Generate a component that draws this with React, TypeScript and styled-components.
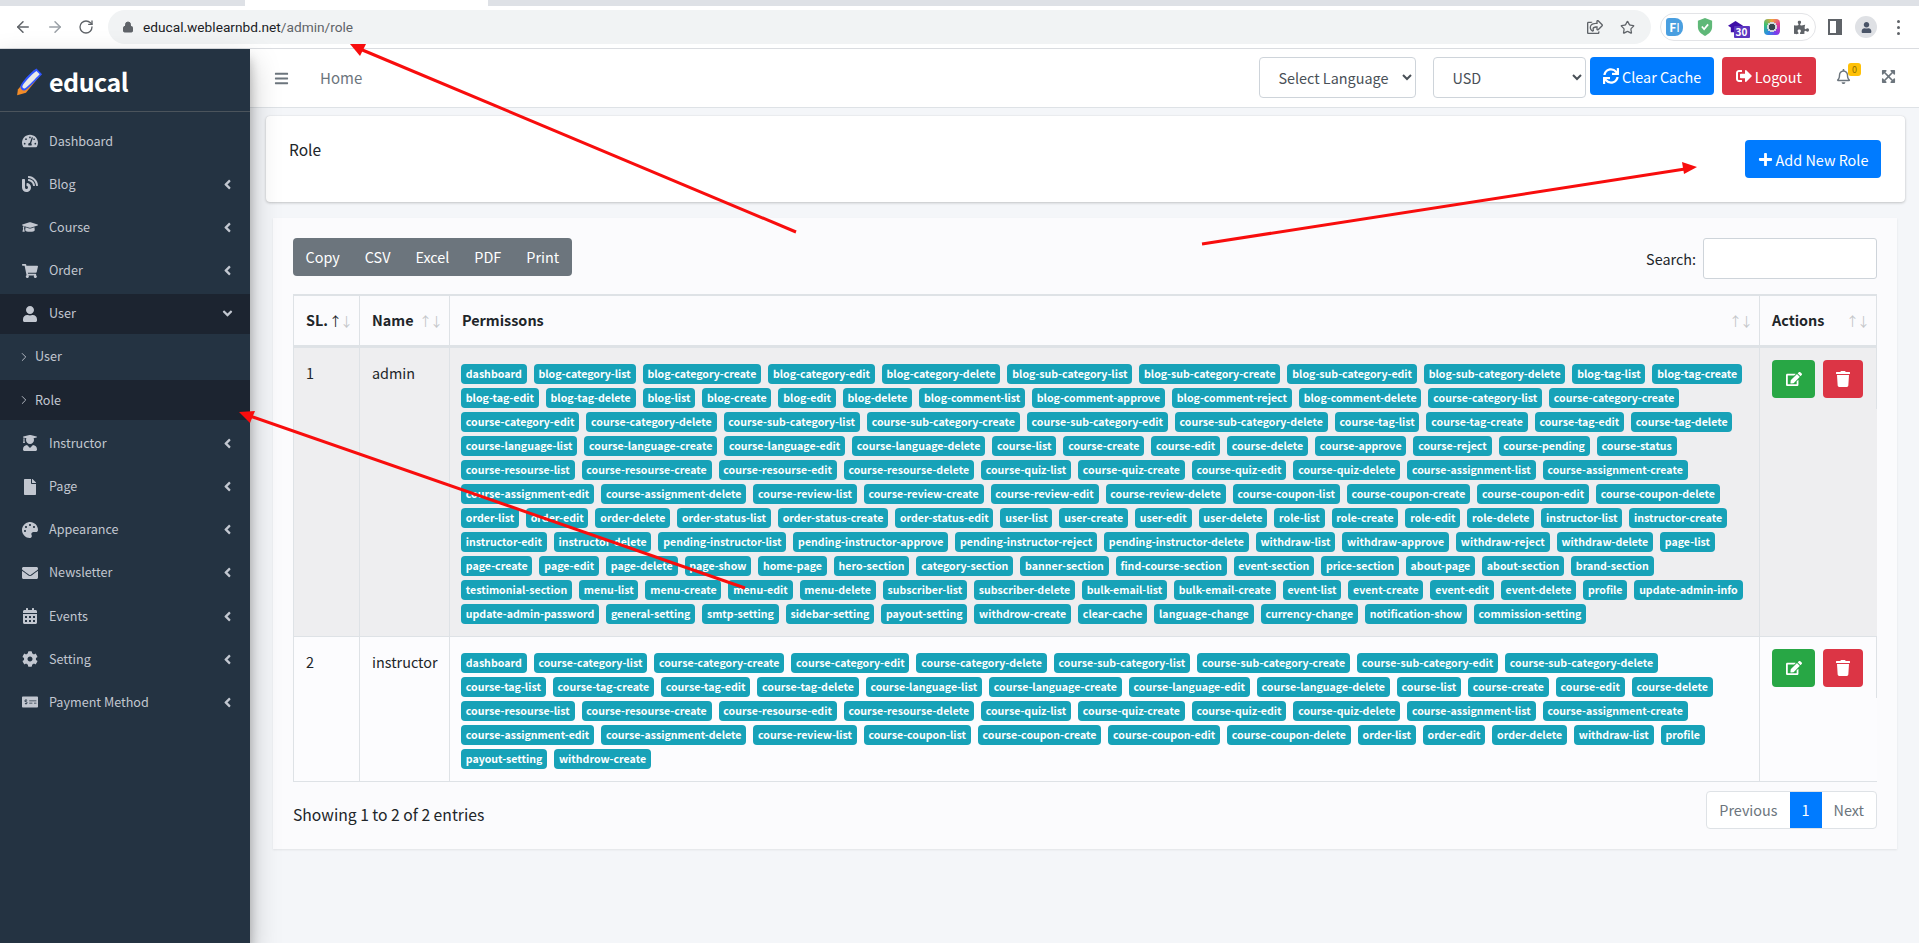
import styled, { createGlobalStyle } from "styled-components";
import {
  FaAngleDown,
  FaAngleLeft,
  FaBars,
  FaBlog,
  FaCalendarAlt,
  FaCog,
  FaEdit,
  FaEnvelope,
  FaExpandArrowsAlt,
  FaFile,
  FaGraduationCap,
  FaMoneyCheckAlt,
  FaPalette,
  FaPlus,
  FaPuzzlePiece,
  FaRegBell,
  FaRegShareSquare,
  FaShoppingCart,
  FaSignOutAlt,
  FaSync,
  FaTachometerAlt,
  FaTrash,
  FaUser,
  FaUserGraduate,
} from "react-icons/fa";
import { ArrowLeft, ArrowRight, ChevronRight, RotateCw, Lock, Star } from "lucide-react";

const menu = [
  { label: "Dashboard", icon: <FaTachometerAlt />, arrow: "none" },
  { label: "Blog", icon: <FaBlog />, arrow: "left" },
  { label: "Course", icon: <FaGraduationCap />, arrow: "left" },
  { label: "Order", icon: <FaShoppingCart />, arrow: "left" },
  { label: "User", icon: <FaUser />, arrow: "down", open: true },
  { label: "Instructor", icon: <FaUserGraduate />, arrow: "left" },
  { label: "Page", icon: <FaFile />, arrow: "left" },
  { label: "Appearance", icon: <FaPalette />, arrow: "left" },
  { label: "Newsletter", icon: <FaEnvelope />, arrow: "left" },
  { label: "Events", icon: <FaCalendarAlt />, arrow: "left" },
  { label: "Setting", icon: <FaCog />, arrow: "left" },
  { label: "Payment Method", icon: <FaMoneyCheckAlt />, arrow: "left" },
];

const adminRows = [
  "dashboard blog-category-list blog-category-create blog-category-edit blog-category-delete blog-sub-category-list blog-sub-category-create blog-sub-category-edit blog-sub-category-delete blog-tag-list blog-tag-create",
  "blog-tag-edit blog-tag-delete blog-list blog-create blog-edit blog-delete blog-comment-list blog-comment-approve blog-comment-reject blog-comment-delete course-category-list course-category-create",
  "course-category-edit course-category-delete course-sub-category-list course-sub-category-create course-sub-category-edit course-sub-category-delete course-tag-list course-tag-create course-tag-edit course-tag-delete",
  "course-language-list course-language-create course-language-edit course-language-delete course-list course-create course-edit course-delete course-approve course-reject course-pending course-status",
  "course-resourse-list course-resourse-create course-resourse-edit course-resourse-delete course-quiz-list course-quiz-create course-quiz-edit course-quiz-delete course-assignment-list course-assignment-create",
  "course-assignment-edit course-assignment-delete course-review-list course-review-create course-review-edit course-review-delete course-coupon-list course-coupon-create course-coupon-edit course-coupon-delete",
  "order-list order-edit order-delete order-status-list order-status-create order-status-edit user-list user-create user-edit user-delete role-list role-create role-edit role-delete instructor-list instructor-create",
  "instructor-edit instructor-delete pending-instructor-list pending-instructor-approve pending-instructor-reject pending-instructor-delete withdraw-list withdraw-approve withdraw-reject withdraw-delete page-list",
  "page-create page-edit page-delete page-show home-page hero-section category-section banner-section find-course-section event-section price-section about-page about-section brand-section",
  "testimonial-section menu-list menu-create menu-edit menu-delete subscriber-list subscriber-delete bulk-email-list bulk-email-create event-list event-create event-edit event-delete profile update-admin-info",
  "update-admin-password general-setting smtp-setting sidebar-setting payout-setting withdrow-create clear-cache language-change currency-change notification-show commission-setting",
];

const instructorRows = [
  "dashboard course-category-list course-category-create course-category-edit course-category-delete course-sub-category-list course-sub-category-create course-sub-category-edit course-sub-category-delete",
  "course-tag-list course-tag-create course-tag-edit course-tag-delete course-language-list course-language-create course-language-edit course-language-delete course-list course-create course-edit course-delete",
  "course-resourse-list course-resourse-create course-resourse-edit course-resourse-delete course-quiz-list course-quiz-create course-quiz-edit course-quiz-delete course-assignment-list course-assignment-create",
  "course-assignment-edit course-assignment-delete course-review-list course-coupon-list course-coupon-create course-coupon-edit course-coupon-delete order-list order-edit order-delete withdraw-list profile",
  "payout-setting withdrow-create",
];

const Permissions = ({ rows }: { rows: string[] }) => (
  <BadgeList>
    {rows.map((row) => (
      <BadgeRow key={row}>
        {row.split(" ").map((name) => (
          <Badge key={name}>{name}</Badge>
        ))}
      </BadgeRow>
    ))}
  </BadgeList>
);

const RowActions = () => (
  <ActionsBox>
    <IconButton $color="#28a745">
      <FaEdit />
    </IconButton>
    <DeleteButton $color="#dc3545">
      <FaTrash />
    </DeleteButton>
  </ActionsBox>
);

const SortHead = ({ title, active }: { title: string; active?: boolean }) => (
  <HeadInner>
    {title}
    <SortArrows>
      <SortArrow $on={active}>↑</SortArrow>
      <SortArrow>↓</SortArrow>
    </SortArrows>
  </HeadInner>
);

const App = () => {
  return (
    <Page>
      <GlobalStyle />
      <TabStrip>
        <ActiveTab />
      </TabStrip>
      <Toolbar>
        <NavIcons>
          <ArrowLeft size={18} />
          <ArrowRight size={18} color="#9aa0a6" />
          <RotateCw size={16} />
        </NavIcons>
        <UrlPill>
          <Lock size={12} fill="#5f6368" />
          <UrlText>
            educal.weblearnbd.net<UrlPath>/admin/role</UrlPath>
          </UrlText>
          <UrlActions>
            <FaRegShareSquare size={16} />
            <Star size={15} />
          </UrlActions>
        </UrlPill>
        <Extensions>
          <ExtF>F<span>I</span></ExtF>
          <svg width="16" height="20" viewBox="0 0 18 20">
            <path d="M9 0 L17 3 V10 C17 15 13 18 9 20 C5 18 1 15 1 10 V3 Z" fill="#5fb878" />
            <path d="M5.5 9.5 L8 12.5 L12.5 7" fill="none" stroke="#fff" strokeWidth="2" />
          </svg>
          <ExtHat>
            <svg width="17" height="15" viewBox="0 0 18 16">
              <path d="M9 1 L17 6 L14 8 V13 H4 V8 L1 6 Z" fill="#3f0fa8" />
            </svg>
            <ExtCount>30</ExtCount>
          </ExtHat>
          <ExtRing />
          <FaPuzzlePiece size={15} color="#5f6368" />
        </Extensions>
        <SidePanelIcon />
        <Avatar>
          <FaUser size={11} color="#4a5568" />
        </Avatar>
        <Kebab>
          <i />
          <i />
          <i />
        </Kebab>
      </Toolbar>

      <Body>
        <Sidebar>
          <Brand>
            <svg width="30" height="29" viewBox="0 0 34 36">
              <path d="M2 28 L1 35 L12 32 L30 10 L22 4 Z" fill="#f28c28" />
              <path d="M5 24 C6 20 18 6 25 2 L32 9 C26 15 16 26 11 29 C8 30 5 28 5 24 Z" fill="#2f55ff" />
              <path d="M7.5 24 C9 20 19 9 25 5 L29 9 C24 14 15 24 11 26.5 C9 27.5 7.5 26 7.5 24 Z" fill="#e9e9e9" />
            </svg>
            <BrandName>educal</BrandName>
          </Brand>
          <Menu>
            {menu.map((item) => (
              <li key={item.label}>
                <MenuItem $open={item.open}>
                  <MenuIcon>{item.icon}</MenuIcon>
                  <MenuLabel>{item.label}</MenuLabel>
                  {item.arrow === "left" && <FaAngleLeft size={15} />}
                  {item.arrow === "down" && <FaAngleDown size={15} />}
                </MenuItem>
                {item.open && (
                  <>
                    <SubItem>
                      <ChevronRight size={14} strokeWidth={1.5} />
                      User
                    </SubItem>
                    <SubItem $active>
                      <ChevronRight size={14} strokeWidth={1.5} />
                      Role
                    </SubItem>
                  </>
                )}
              </li>
            ))}
          </Menu>
        </Sidebar>

        <Main>
          <TopBar>
            <FaBars size={15} color="#6c757d" />
            <HomeLink>Home</HomeLink>
            <TopRight>
              <LanguageSelect defaultValue="lang">
                <option value="lang">Select Language</option>
              </LanguageSelect>
              <CurrencySelect defaultValue="usd">
                <option value="usd">USD</option>
              </CurrencySelect>
              <Button $color="#007bff">
                <FaSync size={16} />
                Clear Cache
              </Button>
              <LogoutButton $color="#dc3545">
                <FaSignOutAlt size={16} />
                Logout
              </LogoutButton>
              <BellWrap>
                <FaRegBell size={15} color="#6c757d" />
                <BellBadge>0</BellBadge>
              </BellWrap>
              <FaExpandArrowsAlt size={15} color="#6c757d" />
            </TopRight>
          </TopBar>

          <Content>
            <TitleCard>
              <TitleText>Role</TitleText>
              <Button $color="#007bff">
                <FaPlus size={15} />
                Add New Role
              </Button>
            </TitleCard>

            <TableCard>
              <TableTools>
                <ExportGroup>
                  <ExportButton>Copy</ExportButton>
                  <ExportButton>CSV</ExportButton>
                  <ExportButton>Excel</ExportButton>
                  <ExportButton>PDF</ExportButton>
                  <ExportButton>Print</ExportButton>
                </ExportGroup>
                <SearchLabel>
                  Search:
                  <SearchInput />
                </SearchLabel>
              </TableTools>

              <RoleTable>
                <colgroup>
                  <col width="66" />
                  <col width="90" />
                  <col />
                  <col width="117" />
                </colgroup>
                <thead>
                  <tr>
                    <Th>
                      <SortHead title="SL." active />
                    </Th>
                    <Th>
                      <SortHead title="Name" />
                    </Th>
                    <Th>
                      <SortHead title="Permissons" />
                    </Th>
                    <Th>
                      <SortHead title="Actions" />
                    </Th>
                  </tr>
                </thead>
                <tbody>
                  <tr>
                    <Td $odd>1</Td>
                    <Td $odd>admin</Td>
                    <BadgeCell $odd>
                      <Permissions rows={adminRows} />
                    </BadgeCell>
                    <ActionsCell $odd>
                      <RowActions />
                    </ActionsCell>
                  </tr>
                  <tr>
                    <Td>2</Td>
                    <Td>instructor</Td>
                    <BadgeCell>
                      <Permissions rows={instructorRows} />
                    </BadgeCell>
                    <ActionsCell>
                      <RowActions />
                    </ActionsCell>
                  </tr>
                </tbody>
              </RoleTable>

              <TableFoot>
                <EntriesText>Showing 1 to 2 of 2 entries</EntriesText>
                <Pager>
                  <PageLink>Previous</PageLink>
                  <PageLink $active>1</PageLink>
                  <PageLink>Next</PageLink>
                </Pager>
              </TableFoot>
            </TableCard>
          </Content>
        </Main>
      </Body>

      <Arrows viewBox="0 0 1919 943" width="1919" height="943">
        <line x1="796" y1="232" x2="360" y2="49" stroke="#f80d0d" strokeWidth="3" />
        <polygon points="350,44 366,44 360,56" fill="#f80d0d" />
        <line x1="1202" y1="244" x2="1685" y2="169" stroke="#f80d0d" strokeWidth="3" />
        <polygon points="1697,167 1682,162 1684,174" fill="#f80d0d" />
        <line x1="745" y1="588" x2="250" y2="416" stroke="#f80d0d" strokeWidth="3" />
        <polygon points="239,412 255,411 250,423" fill="#f80d0d" />
      </Arrows>
    </Page>
  );
};

const GlobalStyle = createGlobalStyle`
  html, body {
    margin: 0;
    padding: 0;
    background: #f4f6f9;
  }
  * {
    box-sizing: border-box;
  }
  body {
    font-family: "Noto Sans CJK SC", "Open Sans", sans-serif;
    font-size: 14.4px;
    line-height: 1.5;
    color: #212529;
  }
`;

const Page = styled.div`
  position: relative;
  display: flex;
  flex-direction: column;
  height: 943px;
  overflow: hidden;
`;

const TabStrip = styled.div`
  display: flex;
  height: 6px;
  padding-left: 245px;
  background: #dee1e6;
  flex: none;
`;

const ActiveTab = styled.div`
  width: 243px;
  background: #fff;
`;

const Toolbar = styled.div`
  display: flex;
  align-items: center;
  height: 43px;
  flex: none;
  background: #fff;
  border-bottom: 1px solid #dadce0;
  color: #5f6368;
`;

const NavIcons = styled.div`
  display: flex;
  align-items: center;
  gap: 14px;
  width: 108px;
  padding-left: 14px;
`;

const UrlPill = styled.div`
  display: flex;
  align-items: center;
  width: 1543px;
  height: 34px;
  padding: 0 16px 0 14px;
  border-radius: 17px;
  background: #f1f3f4;
`;

const UrlText = styled.span`
  margin-left: 9px;
  font-family: "Roboto", sans-serif;
  font-size: 13.7px;
  color: #202124;
`;

const UrlPath = styled.span`
  color: #5f6368;
`;

const UrlActions = styled.div`
  display: flex;
  align-items: center;
  gap: 17px;
  margin-left: auto;
`;

const Extensions = styled.div`
  display: flex;
  align-items: center;
  justify-content: space-between;
  width: 156px;
  height: 28px;
  margin-left: 9px;
  padding: 0 6px 0 5px;
  border: 1px solid #e3e4e7;
  border-radius: 14px;
`;

const ExtF = styled.div`
  width: 17px;
  height: 18px;
  border-radius: 3px 8px 8px 3px;
  background: #4a9fe0;
  color: #fff;
  font-size: 12px;
  line-height: 18px;
  text-align: center;
  font-weight: 700;

  span {
    font-weight: 400;
  }
`;

const ExtHat = styled.div`
  position: relative;
  width: 24px;
  height: 18px;
`;

const ExtCount = styled.span`
  position: absolute;
  left: 7px;
  top: 8px;
  width: 16px;
  height: 12px;
  border-radius: 1px;
  background: #5b35c0;
  color: #fff;
  font-size: 10px;
  line-height: 12px;
  font-weight: 700;
  text-align: center;
`;

const ExtRing = styled.div`
  width: 16px;
  height: 16px;
  border-radius: 4px;
  background: radial-gradient(circle, #37474f 0 3px, #cfd8dc 3px 5px, transparent 5px),
    conic-gradient(#f2a33c, #e0389a, #7c3aed, #2c8de0, #38c172, #f2a33c);
`;

const SidePanelIcon = styled.div`
  width: 14px;
  height: 16px;
  margin-left: 12px;
  border: 2px solid #5f6368;
  border-right-width: 6px;
`;

const Avatar = styled.div`
  display: flex;
  align-items: center;
  justify-content: center;
  width: 22px;
  height: 22px;
  margin-left: 13px;
  border-radius: 50%;
  background: #dfe1e5;
`;

const Kebab = styled.div`
  display: flex;
  flex-direction: column;
  gap: 3px;
  margin-left: 20px;

  i {
    width: 3px;
    height: 3px;
    border-radius: 50%;
    background: #5f6368;
  }
`;

const Body = styled.div`
  display: flex;
  flex: 1;
  min-height: 0;
`;

const Sidebar = styled.aside`
  width: 250px;
  flex: none;
  background: #243342;
  color: #c2c7d0;
  box-shadow: 0 14px 28px rgba(0, 0, 0, 0.25), 0 10px 10px rgba(0, 0, 0, 0.22);
  z-index: 1;
`;

const Brand = styled.div`
  display: flex;
  align-items: center;
  gap: 4px;
  height: 63px;
  padding: 2px 0 0 15px;
  border-bottom: 1px solid #4b545c;
`;

const BrandName = styled.span`
  color: #fff;
  font-size: 25px;
  font-weight: 700;
  letter-spacing: -0.5px;
  line-height: 1;
`;

const Menu = styled.ul`
  list-style: none;
  margin: 0;
  padding: 9px 0 0;
`;

const MenuItem = styled.div<{ $open?: boolean }>`
  display: flex;
  align-items: center;
  height: 40px;
  margin-bottom: 3.2px;
  padding: 0 15px 0 20px;
  font-size: 12.6px;
  background: ${(p) => (p.$open ? "#1c2430" : "transparent")};
`;

const MenuIcon = styled.span`
  display: flex;
  justify-content: center;
  width: 20px;
  margin-right: 9px;
  font-size: 16px;
`;

const MenuLabel = styled.span`
  flex: 1;
`;

const SubItem = styled.div<{ $active?: boolean }>`
  display: flex;
  align-items: center;
  gap: 4px;
  height: 40px;
  margin-bottom: 3.2px;
  padding-left: 17px;
  font-size: 12.6px;
  background: ${(p) => (p.$active ? "#1c2430" : "transparent")};
`;

const Main = styled.main`
  display: flex;
  flex-direction: column;
  flex: 1;
  min-width: 0;
`;

const TopBar = styled.div`
  display: flex;
  align-items: center;
  height: 59px;
  flex: none;
  padding: 0 23px 0 24px;
  background: #fff;
  border-bottom: 1px solid #dee2e6;
`;

const HomeLink = styled.span`
  margin-left: 31px;
  font-size: 15px;
  color: #6c757d;
`;

const TopRight = styled.div`
  display: flex;
  align-items: flex-start;
  align-self: flex-start;
  margin: 8px 0 0 auto;

  > svg {
    margin: 12px 0 0 30px;
  }
`;

const NativeSelect = styled.select`
  height: 41px;
  padding: 0 6px 0 14px;
  border: 1px solid #ced4da;
  border-radius: 4px;
  background: #fff;
  color: #495057;
  font-family: inherit;
  font-size: 14.4px;
`;

const LanguageSelect = styled(NativeSelect)`
  width: 157px;
  margin-right: 17px;
`;

const CurrencySelect = styled(NativeSelect)`
  width: 153px;
  margin-right: 4px;
`;

const Button = styled.button<{ $color: string }>`
  display: inline-flex;
  align-items: center;
  gap: 3px;
  height: 38px;
  padding: 0 12.6px;
  border: 0;
  border-radius: 4px;
  background: ${(p) => p.$color};
  color: #fff;
  font-family: inherit;
  font-size: 14.4px;
`;

const LogoutButton = styled(Button)`
  margin-left: 8px;
  padding: 0 14px;
`;

const BellWrap = styled.div`
  position: relative;
  margin: 12px 0 0 20px;
  line-height: 0;
`;

const BellBadge = styled.span`
  position: absolute;
  top: -6px;
  left: 12px;
  width: 13px;
  height: 13px;
  border-radius: 3px;
  background: #ffc107;
  color: #8a6d00;
  font-size: 9px;
  line-height: 13px;
  text-align: center;
`;

const Content = styled.div`
  flex: 1;
  padding: 8px 14px 0 16px;
`;

const TitleCard = styled.section`
  display: flex;
  align-items: center;
  justify-content: space-between;
  height: 86px;
  padding: 0 24px 0 23px;
  background: #fff;
  border-radius: 4px;
  box-shadow: 0 0 1px rgba(0, 0, 0, 0.125), 0 1px 3px rgba(0, 0, 0, 0.2);
`;

const TitleText = styled.span`
  margin-bottom: 18px;
  font-size: 15.5px;
`;

const TableCard = styled.section`
  height: 631px;
  margin: 16px 8px 0 7px;
  padding: 20px 20px 0;
  background: #fbfbfd;
  box-shadow: 0 1px 2px rgba(0, 0, 0, 0.08);
`;

const TableTools = styled.div`
  display: flex;
  justify-content: space-between;
  align-items: flex-start;
  height: 56px;
`;

const ExportGroup = styled.div`
  display: flex;
  height: 38px;
  overflow: hidden;
  border-radius: 4px;
  background: #6c757d;
`;

const ExportButton = styled.button`
  padding: 0 12.5px;
  border: 0;
  background: transparent;
  color: #fff;
  font-family: inherit;
  font-size: 14.4px;
  line-height: 1;
`;

const SearchLabel = styled.label`
  display: flex;
  align-items: center;
  gap: 7px;
`;

const SearchInput = styled.input`
  width: 174px;
  height: 41px;
  border: 1px solid #ced4da;
  border-radius: 3px;
  background: #fff;
`;

const RoleTable = styled.table`
  width: 100%;
  table-layout: fixed;
  border-collapse: collapse;
`;

const Th = styled.th`
  height: 51px;
  padding: 0 8px 0 12px;
  border: 1px solid #dee2e6;
  border-top-width: 2px;
  border-bottom-width: 3px;
  text-align: left;
  font-weight: 700;
`;

const HeadInner = styled.div`
  display: flex;
  align-items: center;
  justify-content: space-between;
`;

const SortArrows = styled.span`
  display: flex;
  font-size: 13px;
  font-weight: 400;
  line-height: 1;
  letter-spacing: -2px;
`;

const SortArrow = styled.span<{ $on?: boolean }>`
  color: ${(p) => (p.$on ? "#212529" : "#c4c6c9")};
`;

const Td = styled.td<{ $odd?: boolean }>`
  padding: 14px 12px;
  vertical-align: top;
  border: 1px solid #dee2e6;
  background: ${(p) => (p.$odd ? "#eeeef0" : "#fcfcfe")};
`;

const BadgeCell = styled(Td)`
  padding: 16px 10px 12px 11px;
`;

const ActionsCell = styled(Td)`
  padding: 0;
  border-right: 0;
`;

const ActionsBox = styled.div`
  display: flex;
  gap: 8px;
  height: 61px;
  padding: 12px 0 0 12px;
  border-right: 1px solid #dee2e6;
`;

const IconButton = styled.button<{ $color: string }>`
  display: flex;
  align-items: center;
  justify-content: center;
  height: 38px;
  width: 43px;
  padding: 0;
  border: 0;
  border-radius: 4px;
  background: ${(p) => p.$color};
  color: #fff;
  font-size: 16px;
`;

const DeleteButton = styled(IconButton)`
  width: 40px;
`;

const BadgeList = styled.div`
  display: flex;
  flex-direction: column;
  gap: 4px;
`;

const BadgeRow = styled.div`
  display: flex;
  gap: 7px;
`;

const Badge = styled.span`
  height: 20px;
  padding: 0 4.8px;
  border-radius: 4px;
  background: #17a2b8;
  color: #fff;
  font-size: 10.6px;
  font-weight: 700;
  line-height: 20px;
  white-space: nowrap;
`;

const TableFoot = styled.div`
  display: flex;
  justify-content: space-between;
  align-items: flex-start;
  padding-top: 9px;
`;

const EntriesText = styled.span`
  padding-top: 12px;
  font-size: 15.7px;
`;

const Pager = styled.div`
  display: flex;
  height: 38px;
  overflow: hidden;
  border: 1px solid #dee2e6;
  border-radius: 4px;
  background: #fff;
`;

const PageLink = styled.span<{ $active?: boolean }>`
  padding: 0 12px;
  line-height: 36px;
  background: ${(p) => (p.$active ? "#007bff" : "transparent")};
  color: ${(p) => (p.$active ? "#fff" : "#6c757d")};
`;

const Arrows = styled.svg`
  position: absolute;
  left: 0;
  top: 0;
  pointer-events: none;
  z-index: 5;
`;

export default App;
